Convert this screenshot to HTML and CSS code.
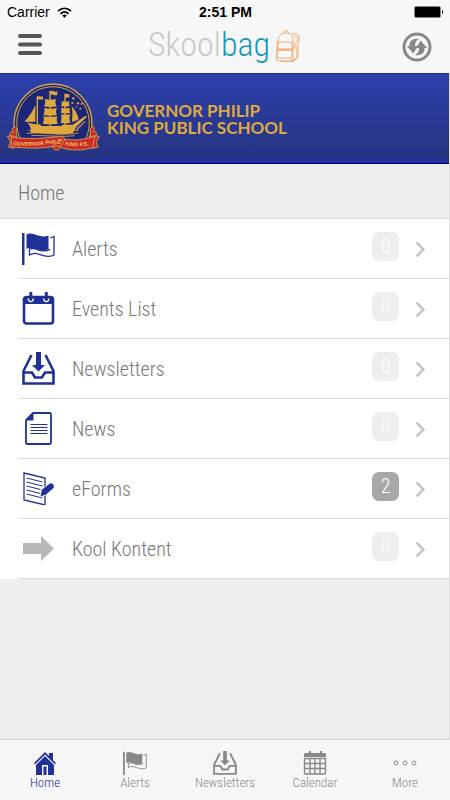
FILE: index.html
```html
<!DOCTYPE html>
<html lang="en">

<head>
    <meta charset="UTF-8">
    <meta name="viewport" content="width=device-width, initial-scale=1.0">
    <title>Skoolbag</title>
    <link rel="stylesheet" href="styles.css">
</head>

<body>

    <!-- icons used more than once -->
    <svg class="sprite" aria-hidden="true">
        <symbol id="flag" viewBox="0 0 33 33">
            <path d="M0 1h2.500v32H0z" fill="currentColor" />
            <path d="M4.500 2.500C9 0 13 3 18 4c3 .7 6 .5 8.500-.5V17c-4 2-7 1.500-10.500.5-4-1.200-7-2.500-11.500-.7z" fill="currentColor" />
            <path d="M28.300 6l3.700-1.500v18.500c-4 2.500-8 1.500-12 .2-5-1.700-8-3-12.500-.2v-6c3-1 6-.3 8.500.8 3 1 7 2 12-.5" fill="none" stroke="currentColor" stroke-width="1.300" />
        </symbol>
        <symbol id="inbox" viewBox="0 0 33 33">
            <path d="M9.500 3L1.500 19v12.500h30V19L23.500 3M1.500 20.500h8.500l3 5h7l3-5h8.500" fill="none" stroke="currentColor" stroke-width="2.600" />
            <path d="M14 0h5v13h4l-6.500 6.500L10 13h4z" fill="currentColor" />
        </symbol>
        <symbol id="chevron" viewBox="0 0 11 17">
            <path d="M1.500 2.500l7 7-7 7" fill="none" stroke="currentColor" stroke-width="2.600" />
        </symbol>
    </svg>

    <div class="statusbar">
        <div class="carrier">
            <span>Carrier</span>
            <svg width="15" height="11" viewBox="0 0 15 11">
                <path d="M1 4.200c4-3.800 9-3.800 13 0M3.500 6.800c2.500-2.300 5.500-2.300 8 0" fill="none" stroke="#000" stroke-width="1.600" />
                <path d="M5.300 8.500c1.400-1.200 3-1.200 4.400 0L7.500 10.800z" />
            </svg>
        </div>
        <div class="time">2:51 PM</div>
        <div class="battery">
            <svg width="30" height="12" viewBox="0 0 30 12">
                <rect x=".5" y=".5" width="26" height="11" rx="1.500" fill="#000" stroke="#888" />
                <path d="M28 4c1.600.6 1.600 3.400 0 4z" />
            </svg>
        </div>
    </div>

    <header class="navbar">
        <button class="icon-btn" aria-label="Menu">
            <svg width="24" height="30" viewBox="0 0 24 30">
                <path d="M2 4h20M2 12.500h20M2 21h20" stroke="#555" stroke-width="4" stroke-linecap="round" />
            </svg>
        </button>
        <div class="logo">
            <div class="logo-text"><span class="skool">Skool</span><span class="bag">bag</span></div>
            <svg width="28" height="33" viewBox="0 0 28 33" fill="none" stroke="#f0a468" stroke-width=".9">
                <path d="M4 12c0-6 2-8.500 8-9 6 0 7 3 7 8v20H5c-2 0-3-1-3-3l2-8z" />
                <path d="M9 3c0-3 6-3 6 0M4 12h14v7H3v-7zM3 20h15v8H3zM2 20h17M18 4c5-2 8 1 7 7l-2 7v10l-4 4M20 6c3-1 4 1 3 5l-3 6M19 18h5v9l-5 3M6 31c5 1 10 1 14 0" />
            </svg>
        </div>
        <button class="icon-btn" aria-label="Refresh">
            <svg width="30" height="30" viewBox="0 0 30 30">
                <circle cx="15" cy="15" r="13" fill="none" stroke="#888" stroke-width="3" />
                <path d="M17 7C11 6 7 9 7.500 14H4.800l6.500 7.500L16 14h-3c0-3.500 1-5.500 4-7zM13 23c6 1 10-2 9.500-7h2.700l-6.500-7.500L14 16h3c0 3.500-1 5.500-4 7z" fill="#888" />
            </svg>
        </button>
    </header>

    <main class="content">
        <div class="banner">
            <svg class="crest" width="100" height="80" viewBox="0 0 300 240" role="img" aria-label="School crest">
                <clipPath id="above-ribbon"><path d="M0 0h300v190H0z" /></clipPath>
                <g clip-path="url(#above-ribbon)">
                    <circle cx="147" cy="132" r="117" fill="#1c2678" stroke="#d9a640" stroke-width="4" />
                    <circle cx="147" cy="132" r="109" fill="none" stroke="#d9a640" stroke-width="3" />
                </g>
                <g fill="#deaa3e">
                    <!-- hull -->
                    <path d="M69 130c14 5 28 7 40 6l2 5h62l2-4h31l39-27 4 3-32 30c-6 10-9 15-11 20-40 7-78-4-126 0 2-10 1-20-11-33z" />
                    <!-- masts and sails -->
                    <path d="M98 52h4v90h-4zM136 36h4v106h-4zM181 44h4v98h-4z" />
                    <path d="M94 78v50H61c14-14 25-30 33-50zM138 36c9-3 12 5 22 1v11c-10 3-13-4-20-1zM101 52c6-2 9 3 16 0v9c-7 2-10-2-16 0zM183 45c6-2 8 3 13 0v10c-6 2-8-2-13 0z" />
                    <path d="M122 60c12 3 23 3 34 0-3 8-2 15 2 22-13 3-26 3-38 0 4-8 5-14 2-22zM120 87c13 3 27 3 39 0-4 8-4 14 0 21-14 3-28 3-41 0 4-8 5-14 2-21zM118 112c14 3 29 3 42 0-3 8-2 15 1 22-15 2-30 2-45 0 4-8 5-14 2-22z" />
                    <path d="M172 67c9 2 18 2 25 0-3 6-2 10 0 14-9 3-18 3-26 0 3-5 3-10 1-14zM171 86c9 2 19 2 28 0-4 6-3 10 0 15-10 3-20 3-29 0 3-5 3-10 1-15zM171 106c9 2 19 2 28 0-4 10-3 17 0 25-10 2-20 2-29 0 3-8 3-17 1-25zM203 82c11 12 19 26 21 39-7 5-14 7-21 8 3-16 3-31 0-47z" />
                    <!-- southern cross -->
                    <circle cx="208" cy="58" r="3.500" /><circle cx="222" cy="73" r="3.500" /><circle cx="229" cy="89" r="3" />
                    <circle cx="217" cy="84" r="2" /><circle cx="233" cy="74" r="3" /><circle cx="205" cy="72" r="3" />
                </g>
                <path d="M74 155c40-6 90 9 150-2M68 163c45-5 95 8 155-1M82 170c40-2 80 5 130 0" fill="none" stroke="#deaa3e" stroke-width="2.500" />
                <path id="bow" d="M219 154l70-68" fill="none" />
                <text class="crest-text" font-size="8"><textPath href="#bow">MINERVA</textPath></text>
                <!-- ribbon -->
                <g fill="#c82a2c" stroke="#deaa3e" stroke-width="2.500">
                    <path d="M24 174c-12-6-6-19 4-14-9-12 2-22 9-12v26zM270 174c12-4 8-20-2-16 8-12-1-20-9-11v27zM28 170l-18 2 9 16-5 17 18 3M268 170l18 2-9 16 5 17-18 3" />
                    <path d="M146 206c8 14 27 9 35-24l-32 12z" />
                    <path d="M22 174c48 7 96 5 142-2 8-1 16 1 18 8 28 6 58 2 90-8l-6 34c-32 9-67 9-93 0-8-5-15-6-22-4-42 7-84 7-128 1z" />
                    <path d="M182 180c-4 12-7 19-15 23M145 203c5-10 18-12 27-8" fill="none" />
                </g>
                <path id="ribbon-left" d="M27 198c42 5 88 2 160-10" fill="none" />
                <path id="ribbon-right" d="M183 198c30 7 58 5 100-4" fill="none" />
                <text class="crest-text" font-size="16"><textPath href="#ribbon-left">GOVERNOR PHILIP</textPath></text>
                <text class="crest-text" font-size="16"><textPath href="#ribbon-right">KING P.S.</textPath></text>
            </svg>
            <h1>GOVERNOR PHILIP<br>KING PUBLIC SCHOOL</h1>
        </div>

        <h2>Home</h2>

        <ul class="menu">
            <li>
                <a href="#">
                    <svg class="icon" width="33" height="33"><use href="#flag" /></svg>
                    <span class="label">Alerts</span>
                    <span class="count">0</span>
                    <svg class="arrow" width="11" height="17"><use href="#chevron" /></svg>
                </a>
            </li>
            <li>
                <a href="#">
                    <svg class="icon" width="33" height="33" viewBox="0 0 33 33">
                        <rect x="2" y="5" width="29" height="26.500" rx="2.500" fill="none" stroke="currentColor" stroke-width="2.600" />
                        <path d="M2 5h29v7H2z" fill="currentColor" />
                        <path d="M6.500 6.500c-1 4 5.500 4 4.500 0M22 6.500c-1 4 5.500 4 4.500 0" fill="none" stroke="#fff" stroke-width="1.500" />
                        <path d="M8.800 1v6M24.300 1v6" stroke="currentColor" stroke-width="3" stroke-linecap="round" />
                    </svg>
                    <span class="label">Events List</span>
                    <span class="count">0</span>
                    <svg class="arrow" width="11" height="17"><use href="#chevron" /></svg>
                </a>
            </li>
            <li>
                <a href="#">
                    <svg class="icon" width="33" height="33"><use href="#inbox" /></svg>
                    <span class="label">Newsletters</span>
                    <span class="count">0</span>
                    <svg class="arrow" width="11" height="17"><use href="#chevron" /></svg>
                </a>
            </li>
            <li>
                <a href="#">
                    <svg class="icon" width="33" height="33" viewBox="0 0 33 33">
                        <path d="M11 1h16.500c1 0 1.500.5 1.500 1.500v28c0 1-.5 1.500-1.500 1.500h-22C4.500 32 4 31.500 4 30.500V8z" fill="none" stroke="currentColor" stroke-width="1.800" />
                        <path d="M11.500 1v7.500H4z" fill="currentColor" />
                        <path d="M8.500 12.500h17M8.500 15.500h17M8.500 18.500h17M8.500 21.500h17" stroke="currentColor" stroke-width="1" />
                    </svg>
                    <span class="label">News</span>
                    <span class="count">0</span>
                    <svg class="arrow" width="11" height="17"><use href="#chevron" /></svg>
                </a>
            </li>
            <li>
                <a href="#">
                    <svg class="icon" width="33" height="33" viewBox="0 0 33 33">
                        <path d="M2 1l21 5v27L2 28z" fill="none" stroke="currentColor" stroke-width="1.300" />
                        <path d="M4.500 6l16 4M4.500 10l16 4M4.500 14l14 3.500M4.500 18l14 3.500M4.500 22l16 4" stroke="currentColor" stroke-width="1" />
                        <path d="M18 25l1.500-7.500 8.500-6.500c2.500-.5 5 2 4 5L24 23z" fill="currentColor" stroke="#fff" stroke-width=".8" />
                    </svg>
                    <span class="label">eForms</span>
                    <span class="count unread">2</span>
                    <svg class="arrow" width="11" height="17"><use href="#chevron" /></svg>
                </a>
            </li>
            <li>
                <a href="#">
                    <svg class="icon grey" width="33" height="33" viewBox="0 0 33 33">
                        <path d="M1 11h18V4l13 12.500L19 29v-7H1z" fill="currentColor" />
                    </svg>
                    <span class="label">Kool Kontent</span>
                    <span class="count">0</span>
                    <svg class="arrow" width="11" height="17"><use href="#chevron" /></svg>
                </a>
            </li>
        </ul>
    </main>

    <nav class="tabs">
        <a href="#" class="active">
            <svg width="24" height="24" viewBox="0 0 24 24">
                <path d="M1 12L12 1l4 4V2h4v7l3 3-1.200 1.200L12 3.500l-9.800 9.700z" fill="currentColor" />
                <path d="M12 5l9 9v10h-6V14H9v10H3V14zM10.500 15.500h3V24h-3z" fill="currentColor" />
            </svg>
            <span>Home</span>
        </a>
        <a href="#">
            <svg width="24" height="24"><use href="#flag" /></svg>
            <span>Alerts</span>
        </a>
        <a href="#">
            <svg width="24" height="24"><use href="#inbox" /></svg>
            <span>Newsletters</span>
        </a>
        <a href="#">
            <svg width="24" height="24" viewBox="0 0 24 24">
                <path d="M1 6V3.500C1 2 2 2 3 2h18c1 0 2 0 2 1.500V6z" fill="currentColor" />
                <path d="M7 0v3M18 0v3" stroke="currentColor" stroke-width="2" />
                <path d="M1.500 7.500h21v14c0 1-.5 1.500-1.500 1.500H3c-1 0-1.500-.5-1.500-1.500zM7 7v16M12 7v16M17 7v16M1 12.500h22M1 17.500h22" fill="none" stroke="currentColor" stroke-width="1.400" />
            </svg>
            <span>Calendar</span>
        </a>
        <a href="#">
            <svg width="24" height="24" viewBox="0 0 24 24">
                <g fill="none" stroke="currentColor">
                    <circle cx="3" cy="12" r="2" />
                    <circle cx="12" cy="12" r="2" />
                    <circle cx="21" cy="12" r="2" />
                </g>
            </svg>
            <span>More</span>
        </a>
    </nav>

</body>

</html>
```
FILE: styles.css
```css
* {
    box-sizing: border-box;
}

body {
    margin: 0;
    min-height: 100vh;
    display: flex;
    flex-direction: column;
    font-family: "Roboto Condensed", Roboto, sans-serif;
    font-weight: 300;
    color: #777;
    background-color: #eee;
}

a {
    color: inherit;
    text-decoration: none;
}

svg {
    display: block;
    flex: none;
}

.sprite {
    display: none;
}

/* status bar */
.statusbar {
    display: flex;
    align-items: center;
    height: 24px;
    padding: 0 6px 0 7px;
    font-family: "Liberation Sans", Arial, sans-serif;
    font-size: 14px;
    font-weight: 400;
    color: #000;
    background-color: #f7f7f7;
}

.carrier,
.battery {
    flex: 1;
    display: flex;
    align-items: center;
    gap: 7px;
}

.battery {
    justify-content: flex-end;
}

.time {
    font-weight: 700;
}

/* top bar */
.navbar {
    display: flex;
    justify-content: space-between;
    align-items: center;
    height: 49px;
    padding: 0 18px 4px;
    background-color: #f7f7f7;
}

.icon-btn {
    width: 30px;
    height: 30px;
    padding: 0;
    border: none;
    background: none;
    cursor: pointer;
    display: flex;
    align-items: center;
}

.logo {
    display: flex;
    align-items: center;
    gap: 4px;
}

.logo-text {
    padding-bottom: 6px;
    font-size: 34px;
    line-height: 36px;
}

.skool {
    color: #c8c8c8;
}

.bag {
    color: #1597bd;
    font-weight: 350;
}

/* main area */
.content {
    flex: 1;
    border-right: 1px solid #ddd;
}

.banner {
    display: flex;
    align-items: center;
    gap: 3px;
    height: 91px;
    padding: 0 4px;
    border-top: 1px solid #2230a0;
    border-bottom: 1px solid #00007c;
    background: linear-gradient(#2d3fae, #263580 94%, #25309a 95%);
}

.banner h1 {
    margin: 0;
    font-family: Lato, sans-serif;
    font-size: 17px;
    line-height: 17px;
    font-weight: 700;
    color: #deaa3e;
}

.crest-text {
    font-family: "Liberation Sans", Arial, sans-serif;
    font-weight: 700;
    fill: #f0c060;
}

.content h2 {
    margin: 0;
    padding: 0 18px;
    font-size: 20px;
    line-height: 58px;
    height: 55px;
    font-weight: 300;
    border-bottom: 1px solid #ddd;
}

.menu {
    margin: 0;
    padding: 0 0 0 18px;
    list-style: none;
    background-color: #fff;
}

.menu a {
    display: flex;
    align-items: center;
    height: 60px;
    padding: 0 23px 0 4px;
    border-bottom: 1px solid #ddd;
}

.icon {
    color: #1f3197;
}

.icon.grey {
    color: #b8b8b8;
}

.label {
    flex: 1;
    margin-left: 17px;
    font-size: 20px;
}

.count {
    width: 27px;
    height: 29px;
    margin: 0 16px 4px 0;
    border-radius: 7px;
    font-size: 20px;
    line-height: 29px;
    text-align: center;
    color: #fff;
    background-color: #eee;
}

.count.unread {
    background-color: #a8a8a8;
}

.arrow {
    color: #c6c6c6;
}

/* bottom tabs */
.tabs {
    display: flex;
    height: 61px;
    border-top: 1px solid #d4d4d4;
    background-color: #f6f6f6;
}

.tabs a {
    flex: 1;
    display: flex;
    flex-direction: column;
    align-items: center;
    padding-top: 11px;
    font-size: 13px;
    line-height: 16px;
    color: #888;
}

.tabs .active {
    color: #1f3197;
}
```
